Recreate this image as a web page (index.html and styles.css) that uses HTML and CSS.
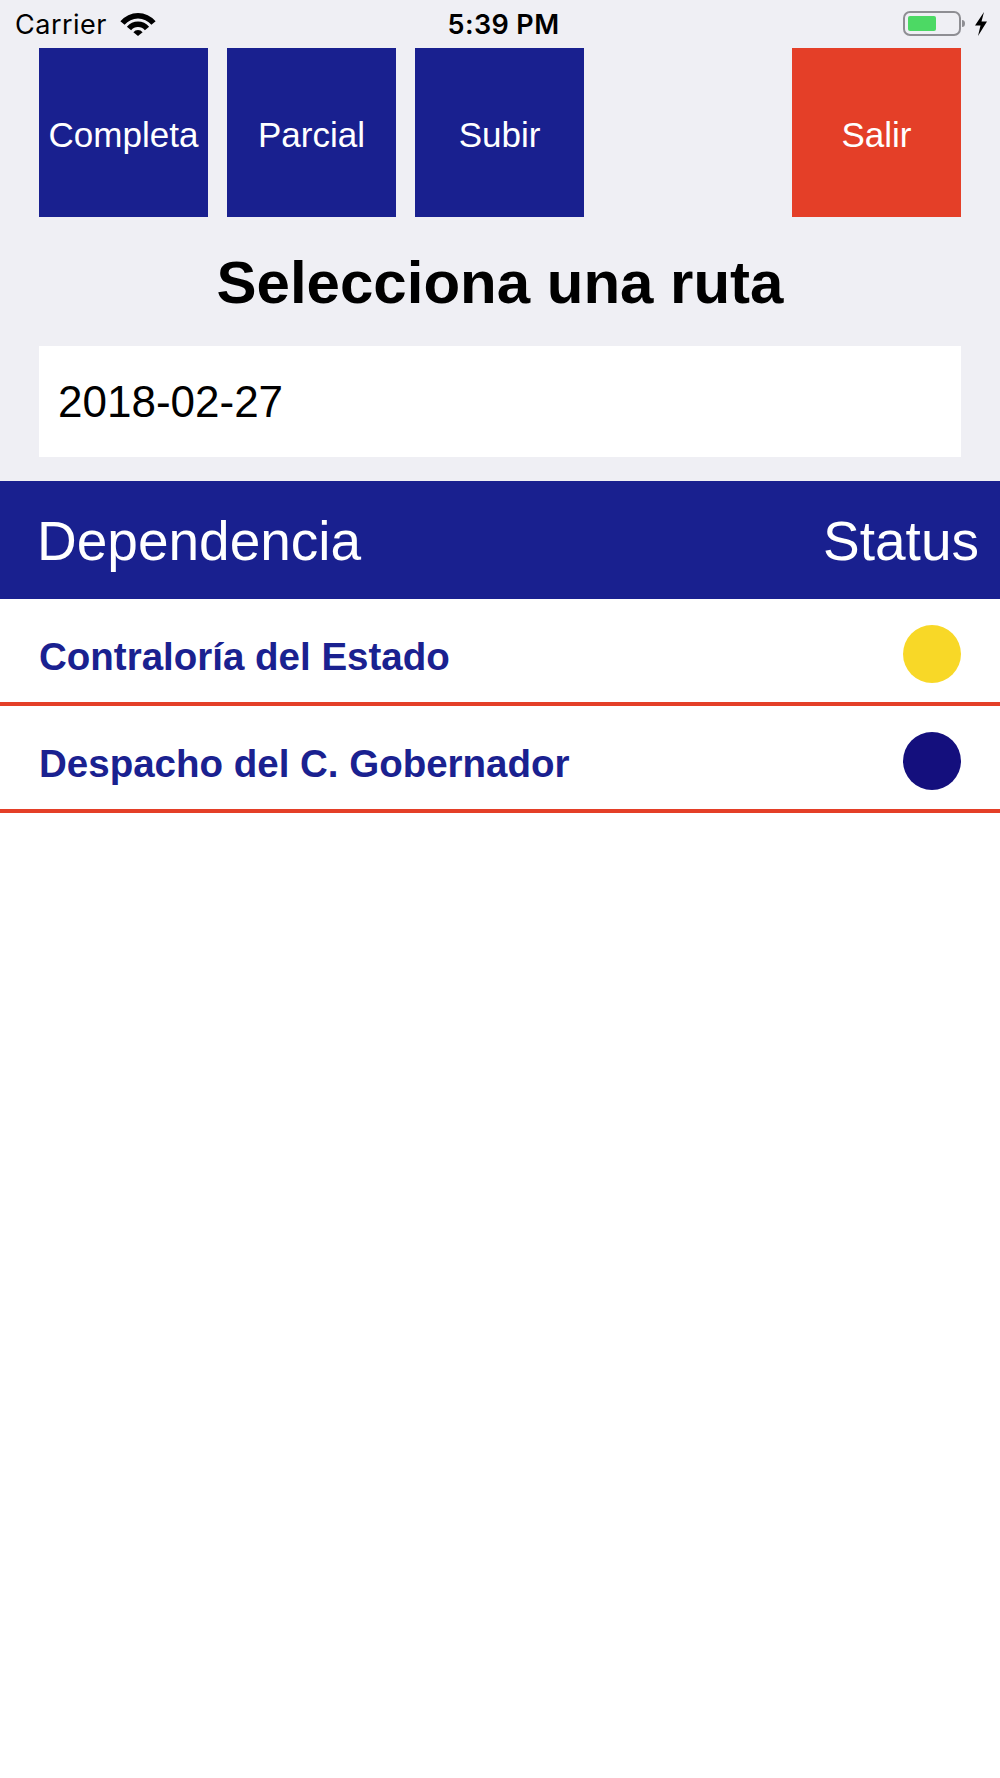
FILE: index.html
```html
<!DOCTYPE html>
<html lang="es">
<head>
  <meta charset="UTF-8">
  <meta name="viewport" content="width=device-width, initial-scale=1.0">
  <title>Selecciona una ruta</title>
  <link rel="stylesheet" href="styles.css">
</head>
<body>
  <div class="top">
    <div class="status-bar">
      <div class="status-left">
        <span>Carrier</span>
        <svg class="wifi" width="36" height="24" viewBox="0 0 36 24">
          <path d="M0.38 8.22 A23 23 0 0 1 35.62 8.22 L31.41 11.75 A17.5 17.5 0 0 0 4.59 11.75 Z"/>
          <path d="M6.89 13.68 A14.5 14.5 0 0 1 29.11 13.68 L24.89 17.21 A9 9 0 0 0 11.11 17.21 Z"/>
          <path d="M18 23 L13.4 19.14 A6 6 0 0 1 22.6 19.14 Z"/>
        </svg>
      </div>
      <div class="status-time">5:39 PM</div>
      <div class="status-right">
        <svg class="battery" width="64" height="26" viewBox="0 0 64 26">
          <rect x="1" y="1" width="56" height="23" rx="6" fill="none" stroke="#8e8e93" stroke-width="2"/>
          <rect x="5" y="5" width="28" height="15" rx="2" fill="#4cd964"/>
          <path d="M59 9 Q62 9 62 12.5 Q62 16 59 16 Z" fill="#8e8e93"/>
        </svg>
        <svg class="bolt" width="14" height="24" viewBox="0 0 14 24">
          <path d="M10 0 L1 13.5 L6.5 13.5 L4 24 L13 9.5 L7.5 9.5 Z"/>
        </svg>
      </div>
    </div>

    <div class="toolbar">
      <button class="btn">Completa</button>
      <button class="btn">Parcial</button>
      <button class="btn">Subir</button>
      <button class="btn btn-exit">Salir</button>
    </div>

    <h1 class="title">Selecciona una ruta</h1>

    <div class="date-field">2018-02-27</div>
  </div>

  <div class="table-header">
    <span>Dependencia</span>
    <span>Status</span>
  </div>

  <ul class="list">
    <li class="row">
      <span class="row-name">Contraloría del Estado</span>
      <span class="dot dot-pending"></span>
    </li>
    <li class="row">
      <span class="row-name">Despacho del C. Gobernador</span>
      <span class="dot dot-done"></span>
    </li>
  </ul>
</body>
</html>
```

FILE: styles.css
```css
body {
  margin: 0;
  font-family: "Liberation Sans", Arial, sans-serif;
  background-color: #fff;
}
.top {
  background-color: #efeff4;
  padding-bottom: 24px;
}
.status-bar {
  height: 48px;
  display: grid;
  grid-template-columns: 1fr auto 1fr;
  align-items: center;
  padding: 0 12px 0 15px;
  font-family: Inter, "Liberation Sans", sans-serif;
  font-size: 27px;
  color: #000;
}
.status-left {
  display: flex;
  align-items: center;
  gap: 13px;
}
.status-left span {
  letter-spacing: 0.5px;
}
.wifi {
  margin-top: 1px;
}
.status-time {
  font-weight: 600;
  padding-left: 4px;
  letter-spacing: 0.4px;
}
.status-right {
  display: flex;
  justify-content: flex-end;
  align-items: center;
  gap: 7px;
}
.toolbar {
  display: flex;
  gap: 19px;
  padding: 0 39px;
  height: 169px;
}
.btn {
  width: 169px;
  height: 169px;
  border: none;
  padding: 4px 0 0;
  background-color: #19208f;
  color: #fff;
  font-family: "Liberation Sans", Arial, sans-serif;
  font-size: 35px;
  cursor: pointer;
}
.btn-exit {
  margin-left: auto;
  background-color: #e43f28;
}
.title {
  margin: 37px 0 0;
  font-size: 60px;
  line-height: 58px;
  font-weight: bold;
  text-align: center;
  color: #000;
}
.date-field {
  margin: 34px 39px 0;
  height: 111px;
  background-color: #fff;
  display: flex;
  align-items: center;
  padding-left: 19px;
  font-size: 44px;
  color: #000;
}
.table-header {
  height: 118px;
  background-color: #19208f;
  color: #fff;
  display: flex;
  justify-content: space-between;
  align-items: center;
  padding: 2px 21px 0 37px;
  box-sizing: border-box;
  font-size: 55px;
}
.list {
  list-style: none;
  margin: 0;
  padding: 0;
}
.row {
  height: 103px;
  display: flex;
  justify-content: space-between;
  align-items: center;
  padding: 0 39px;
  border-bottom: 4px solid #e43f28;
}
.row-name {
  font-size: 38.5px;
  font-weight: bold;
  color: #1a2190;
  margin-top: 12px;
}
.dot {
  width: 58px;
  height: 58px;
  border-radius: 50%;
  margin-top: 6px;
}
.dot-pending {
  background-color: #f8d827;
}
.dot-done {
  background-color: #140f7d;
}
```
